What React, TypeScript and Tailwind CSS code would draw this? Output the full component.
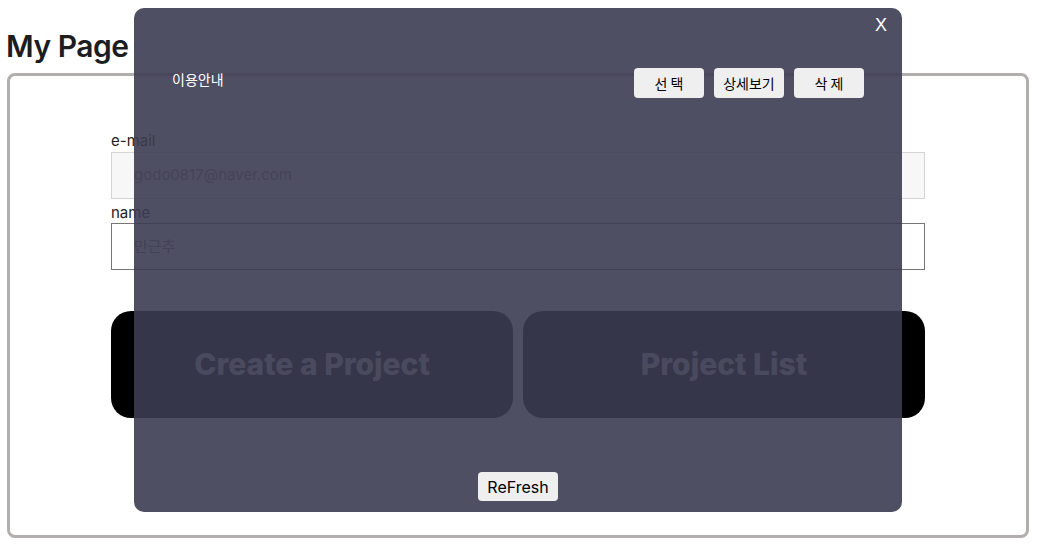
import React from "react";

export default function App() {
  return (
    <div
      className="relative w-[1040px] h-[548px] overflow-hidden bg-white text-[#222]"
      style={{ fontFamily: "Inter, 'Noto Sans CJK KR', sans-serif" }}
    >
      <div className="px-[7px] pt-[28px]">
        <h1 className="text-[30px] leading-[36px] font-semibold text-[#1d1d1f] -ml-[1px] tracking-[-0.5px]">
          My Page
        </h1>
        <div className="mt-[9px] h-[465px] w-[1022px] rounded-[8px] border-[3px] border-[#b3aeae] pt-[54px]">
          <div className="mx-auto w-[814px] flex flex-col">
            <label className="text-[15px] leading-[21px] text-[#222]">e-mail</label>
            <div className="mt-[1px] h-[47px] border border-[#d4d4d4] bg-[#f7f7f7] pl-[22px] flex items-center text-[15px] text-[#8a8a8a]">
              godo0817@naver.com
            </div>
            <label className="mt-[3px] text-[15px] leading-[21px] text-[#222]">name</label>
            <div
              className="h-[47px] border border-[#767676] bg-white pl-[22px] flex items-center text-[15px] text-[#7a7a7a]"
              style={{ fontFamily: "'Noto Sans CJK KR', sans-serif" }}
            >
              만근추
            </div>
            <div className="mt-[41px] flex gap-[10px]">
              <div className="flex-1 h-[107px] rounded-[20px] bg-black flex items-center justify-center text-[30px] font-extrabold text-[#c8c8c8]">
                Create a Project
              </div>
              <div className="flex-1 h-[107px] rounded-[20px] bg-black flex items-center justify-center text-[30px] font-extrabold text-[#c8c8c8]">
                Project List
              </div>
            </div>
          </div>
        </div>
      </div>

      {/* Modal overlay */}
      <div className="absolute left-[134px] top-[8px] w-[768px] h-[504px] rounded-[10px] bg-[rgba(60,60,82,0.9)] flex flex-col">
        <div className="flex justify-end pr-[15px] pt-[5px] h-[30px]">
          <span className="text-white text-[18px] leading-[24px]" style={{ fontFamily: "'Liberation Sans', Arial, sans-serif" }}>
            X
          </span>
        </div>
        <div className="mt-[30px] flex items-start justify-between pl-[38px] pr-[38px]">
          <span
            className="mt-[1px] text-white text-[14px] leading-[20px]"
            style={{ fontFamily: "'Noto Sans CJK KR', sans-serif" }}
          >
            이용안내
          </span>
          <div
            className="flex gap-[10px]"
            style={{ fontFamily: "'Noto Sans CJK KR', sans-serif" }}
          >
            <button className="w-[70px] h-[30px] rounded-[4px] bg-[#efefef] text-black text-[14px]">선 택</button>
            <button className="w-[70px] h-[30px] rounded-[4px] bg-[#efefef] text-black text-[14px]">상세보기</button>
            <button className="w-[70px] h-[30px] rounded-[4px] bg-[#efefef] text-black text-[14px]">삭 제</button>
          </div>
        </div>
        <div className="flex-1" />
        <div className="flex justify-center pb-[11px]">
          <button className="w-[80px] h-[29px] rounded-[4px] bg-[#efefef] text-black text-[16px]">
            ReFresh
          </button>
        </div>
      </div>
    </div>
  );
}
